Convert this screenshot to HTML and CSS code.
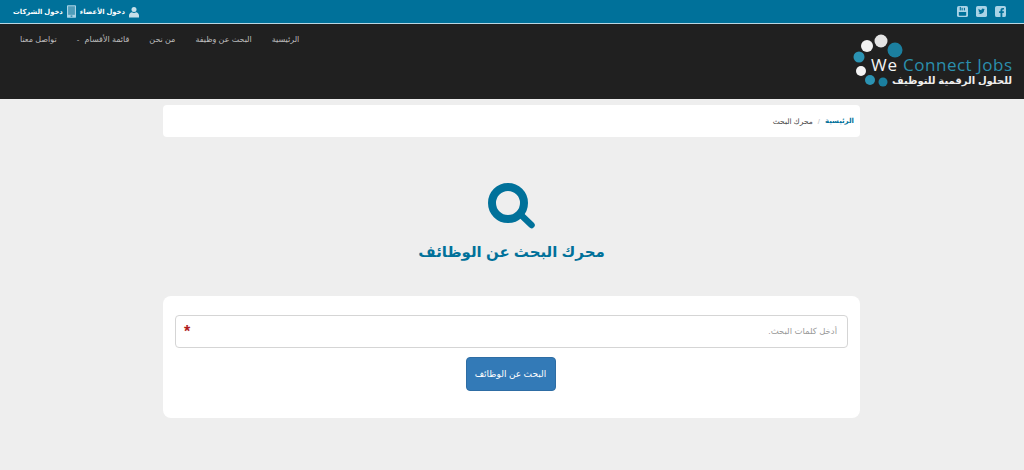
FILE: index.html
```html
<!DOCTYPE html>
<html lang="ar" dir="rtl">
<head>
    <meta charset="UTF-8">
    <meta name="viewport" content="width=device-width, initial-scale=1.0">
    <title>محرك البحث عن الوظائف</title>
    <link rel="stylesheet" href="styles.css">
</head>
<body>
    <div class="topbar">
        <div class="social">
            <a href="#" class="social-icon">
                <svg viewBox="0 0 12 12" width="11" height="11"><path fill="#a9d3e6" d="M2 0h8a2 2 0 0 1 2 2v8a2 2 0 0 1-2 2H8V7.500h1.500L9.800 5.700H8V4.600c0-.5.2-.8.8-.8h1V2.200H8.500C6.900 2.200 6 3.100 6 4.500v1.200H4.500v1.800H6V12H2a2 2 0 0 1-2-2V2a2 2 0 0 1 2-2z"/></svg>
            </a>
            <a href="#" class="social-icon">
                <svg viewBox="0 0 12 12" width="11" height="11"><rect width="12" height="12" rx="2" fill="#a9d3e6"/><path fill="#00719a" d="M9.800 3.600c-.3.100-.6.200-.9.200.3-.2.600-.5.700-.9-.3.200-.6.300-1 .4a1.500 1.500 0 0 0-2.600 1.400C4.700 4.600 3.600 4 2.900 3.100c-.4.700-.2 1.500.5 2-.2 0-.5-.1-.7-.2 0 .7.500 1.300 1.200 1.500-.2.100-.4.100-.7 0 .2.600.7 1 1.400 1-.6.500-1.400.7-2.200.6 2.900 1.800 6.600-.1 6.500-3.800.3-.2.600-.4.700-.6z"/></svg>
            </a>
            <a href="#" class="social-icon">
                <svg viewBox="0 0 12 12" width="11" height="11"><rect width="12" height="12" rx="2" fill="#a9d3e6"/><path fill="#00719a" d="M2 6.500h8v3.200a.8.800 0 0 1-.8.8H2.800a.8.800 0 0 1-.8-.8z"/><rect x="3" y="1" width="1.200" height="3.800" fill="#00719a"/><rect x="5" y="2" width="1.200" height="2.800" fill="#00719a"/><rect x="7.500" y="2" width="1.200" height="2.800" fill="#00719a"/></svg>
            </a>
        </div>
        <div class="login-links">
            <a href="#" class="login-link">
                <svg viewBox="0 0 12 13" width="10" height="12"><circle cx="6" cy="3.500" r="3" fill="#c6dfea"/><path fill="#c6dfea" d="M0 13v-2.500C0 8.500 2 7 3.500 6.800c1.500 1 3.500 1 5 0C10 7 12 8.500 12 10.500V13z"/></svg>
                دخول الأعضاء
            </a>
            <a href="#" class="login-link">
                <svg viewBox="0 0 10 14" width="9" height="13"><rect width="10" height="14" rx="1" fill="#a9d3e6"/><rect x="1.200" y="1.200" width="7.600" height="9.500" fill="#4f9dba"/><rect x="4" y="11.500" width="2" height="1.200" fill="#00719a"/></svg>
                دخول الشركات
            </a>
        </div>
    </div>

    <header class="main-header">
        <div class="logo">
            <svg viewBox="0 0 172 75" width="172" height="75">
                <circle cx="15" cy="22" r="6" fill="#f1f1f1"/>
                <circle cx="29" cy="17" r="6.500" fill="#e4e4e4"/>
                <circle cx="43" cy="26" r="7.500" fill="#1b7f9f"/>
                <circle cx="7" cy="33" r="5.500" fill="#2b93b3"/>
                <circle cx="9" cy="47" r="5" fill="#f4f4f4"/>
                <circle cx="18" cy="56" r="5" fill="#2b93b3"/>
                <circle cx="31" cy="58" r="4.500" fill="#1b7f9f"/>
                <text x="19" y="47" class="logo-we" textLength="26">We</text>
                <text x="51" y="47" class="logo-connect" textLength="109">Connect Jobs</text>
                <text x="160" y="60" class="logo-sub">للحلول الرقمية للتوظيف</text>
            </svg>
        </div>
        <nav class="main-nav">
            <a href="#">الرئيسية</a>
            <a href="#">البحث عن وظيفة</a>
            <a href="#">من نحن</a>
            <a href="#">قائمة الأقسام <span class="caret">-</span></a>
            <a href="#">تواصل معنا</a>
        </nav>
    </header>

    <main class="content">
        <div class="breadcrumb">
            <a href="#">الرئيسية</a>
            <span class="crumb-sep">/</span>
            <span>محرك البحث</span>
        </div>

        <div class="search-title">
            <svg viewBox="0 0 48 48" width="48" height="48"><circle cx="20" cy="20" r="16" fill="none" stroke="#00719a" stroke-width="8"/><path d="M32 31l11.500 11" stroke="#00719a" stroke-width="6.500" stroke-linecap="round"/></svg>
            <h1>محرك البحث عن الوظائف</h1>
        </div>

        <form class="search-card">
            <div class="field">
                <input type="text" placeholder="أدخل كلمات البحث.">
                <span class="required">*</span>
            </div>
            <button type="button" class="search-button">البحث عن الوظائف</button>
        </form>
    </main>
</body>
</html>
```

FILE: styles.css
```css
body {
    font-family: "Liberation Sans", "DejaVu Sans", Arial, sans-serif;
    margin: 0;
    padding: 0;
    height: 470px;
    overflow: hidden;
    background-color: #eeeeee;
    color: #333;
}
a {
    text-decoration: none;
}
.topbar {
    height: 23px;
    background-color: #00719a;
    border-bottom: 1px solid #b9d6e2;
    display: flex;
    justify-content: space-between;
    align-items: center;
    padding: 0 18px 0 13px;
}
.social {
    display: flex;
    gap: 8px;
}
.social-icon {
    display: flex;
}
.login-links {
    display: flex;
    gap: 4px;
}
.login-link {
    display: flex;
    align-items: center;
    gap: 4px;
    color: #fff;
    font-size: 6.800px;
    font-weight: bold;
}
.main-header {
    height: 75px;
    background-color: #202020;
    display: flex;
    justify-content: space-between;
}
.logo {
    width: 172px;
    flex-shrink: 0;
    direction: ltr;
}
.logo-we {
    font-family: "Open Sans", sans-serif;
    font-size: 17px;
    fill: #f4f4f4;
}
.logo-connect {
    font-family: "Open Sans", sans-serif;
    font-size: 17px;
    fill: #2b8fae;
}
.logo-sub {
    font-size: 10px;
    font-weight: bold;
    fill: #eeeeee;
    direction: rtl;
}
.main-nav {
    display: flex;
    gap: 20px;
    align-items: flex-start;
    padding: 11px 0 0 20px;
}
.main-nav a {
    color: #bdbdbd;
    font-size: 8px;
    white-space: nowrap;
}
.caret {
    margin-right: 3px;
}
.content {
    width: 697px;
    margin: 6px 164px 0 163px;
}
.breadcrumb {
    height: 32px;
    background-color: #fff;
    border-radius: 4px;
    display: flex;
    align-items: center;
    gap: 5px;
    padding: 0 6px;
    font-size: 7.500px;
    color: #444;
}
.breadcrumb a {
    color: #00719a;
    font-weight: bold;
    font-size: 7px;
}
.crumb-sep {
    color: #bbb;
}
.search-title {
    display: flex;
    flex-direction: column;
    align-items: center;
    padding-top: 46px;
}
.search-title h1 {
    margin: 7px 0 0;
    font-size: 15px;
    font-weight: bold;
    color: #00719a;
    line-height: 28px;
}
.search-card {
    background-color: #fff;
    border-radius: 8px;
    margin-top: 30px;
    height: 122px;
    box-sizing: border-box;
    padding: 19px 12px 0;
    display: flex;
    flex-direction: column;
    align-items: center;
}
.field {
    position: relative;
    width: 100%;
}
.field input {
    display: block;
    width: 100%;
    height: 33px;
    box-sizing: border-box;
    border: 1px solid #d5d5d5;
    border-radius: 4px;
    padding: 0 10px 2px;
    font-family: inherit;
    font-size: 8.500px;
    background-color: #fff;
}
.field input::placeholder {
    color: #999;
}
.required {
    position: absolute;
    left: 9px;
    top: 9px;
    color: #b01c1c;
    font-size: 16px;
    font-weight: bold;
    line-height: 16px;
}
.search-button {
    margin: 9px 2px 0 0;
    width: 90px;
    height: 34px;
    background-color: #337ab7;
    border: 1px solid #2e6da4;
    border-radius: 4px;
    color: #fff;
    font-family: inherit;
    font-size: 9px;
    padding: 0;
}
```
